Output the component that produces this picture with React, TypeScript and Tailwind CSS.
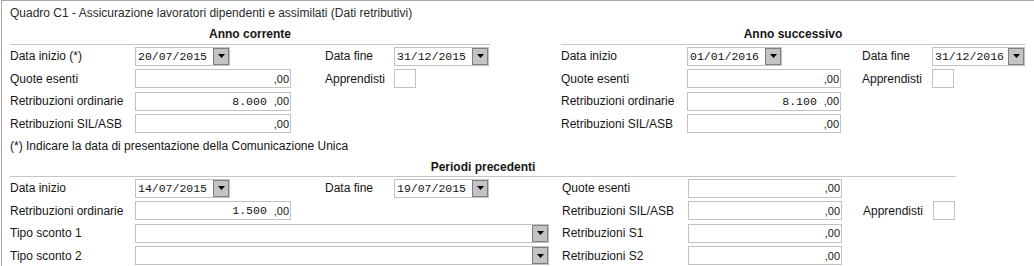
import type { ReactNode } from 'react';

const mono = "font-['Liberation_Mono','DejaVu_Sans_Mono',monospace] text-[11.5px]";

const Arrow = () => (
  <svg width="7" height="4" viewBox="0 0 7 4">
    <path d="M0 0 H7 L3.5 4 Z" fill="#000" />
  </svg>
);

const DropButton = () => (
  <div className="flex h-[17px] w-[16px] shrink-0 items-center justify-center border border-[#7f7f7f] bg-[#c3c3c3]">
    <Arrow />
  </div>
);

const DateField = ({ value }: { value: string }) => (
  <div className="flex h-[19px] w-[95px] items-center border border-[#c2c2c2] bg-white">
    <span className={`flex-1 pl-[2px] text-[#111] ${mono}`}>{value}</span>
    <DropButton />
  </div>
);

const SelectField = () => (
  <div className="flex h-[19px] w-[414px] items-center justify-end border border-[#c2c2c2] bg-white">
    <DropButton />
  </div>
);

const Money = ({ value, w = 'w-[156px]' }: { value?: string; w?: string }) => (
  <div className={`flex h-[19px] ${w} items-center justify-end border border-[#c2c2c2] bg-white pr-[1px]`}>
    {value && <span className={`${mono} text-[#111]`}>{value}&nbsp;</span>}
    <span className="text-[11px]">,00</span>
  </div>
);

const Box = () => <div className="h-[19px] w-[22px] border border-[#c2c2c2] bg-white" />;

const Row = ({ children }: { children: ReactNode }) => (
  <div className="flex h-[22.5px] items-center">{children}</div>
);

const Lbl = ({ w, children }: { w: string; children?: ReactNode }) => (
  <div className={`${w} shrink-0 whitespace-nowrap`}>{children}</div>
);

const Header = ({ title, className }: { title: string; className: string }) => (
  <div className={`${className} border-b border-[#c6c6c6] text-center font-bold`}>{title}</div>
);

export default function App() {
  return (
    <div className="h-[266px] w-[1034px] overflow-hidden bg-white font-['Liberation_Sans',Arial,sans-serif] text-[12px] text-[#161616]">
      <div className="ml-[1px] h-full border-l border-t border-[#a8a8a8] pl-[8px] pt-[5px]">
        <div className="h-[17px] leading-[14px] text-[#2a2a2a]">
          Quadro C1 - Assicurazione lavoratori dipendenti e assimilati (Dati retributivi)
        </div>

        <div className="flex">
          {/* Anno corrente */}
          <div className="w-[480px]">
            <Header title="Anno corrente" className="h-[22px] pt-[4px] leading-[14px]" />
            <Row>
              <Lbl w="w-[125px]">Data inizio (*)</Lbl>
              <Lbl w="w-[190px]"><DateField value="20/07/2015" /></Lbl>
              <Lbl w="w-[69px]">Data fine</Lbl>
              <DateField value="31/12/2015" />
            </Row>
            <Row>
              <Lbl w="w-[125px]">Quote esenti</Lbl>
              <Lbl w="w-[190px]"><Money /></Lbl>
              <Lbl w="w-[69px]">Apprendisti</Lbl>
              <Box />
            </Row>
            <Row>
              <Lbl w="w-[125px]">Retribuzioni ordinarie</Lbl>
              <Money value="8.000" />
            </Row>
            <Row>
              <Lbl w="w-[125px]">Retribuzioni SIL/ASB</Lbl>
              <Money />
            </Row>
          </div>

          <div className="w-[71px]" />

          {/* Anno successivo */}
          <div className="w-[464px]">
            <Header title="Anno successivo" className="h-[22px] pt-[4px] leading-[14px]" />
            <Row>
              <Lbl w="w-[126px]">Data inizio</Lbl>
              <Lbl w="w-[175px]"><DateField value="01/01/2016" /></Lbl>
              <Lbl w="w-[70px]">Data fine</Lbl>
              <DateField value="31/12/2016" />
            </Row>
            <Row>
              <Lbl w="w-[126px]">Quote esenti</Lbl>
              <Lbl w="w-[175px]"><Money w="w-[154px]" /></Lbl>
              <Lbl w="w-[70px]">Apprendisti</Lbl>
              <Box />
            </Row>
            <Row>
              <Lbl w="w-[126px]">Retribuzioni ordinarie</Lbl>
              <Money value="8.100" w="w-[154px]" />
            </Row>
            <Row>
              <Lbl w="w-[126px]">Retribuzioni SIL/ASB</Lbl>
              <Money w="w-[154px]" />
            </Row>
          </div>
        </div>

        <div className="flex h-[22px] items-center">(*) Indicare la data di presentazione della Comunicazione Unica</div>

        {/* Periodi precedenti */}
        <div className="w-[946px]">
          <Header title="Periodi precedenti" className="h-[20px] pt-[3px] leading-[14px]" />
          <Row>
            <Lbl w="w-[125px]">Data inizio</Lbl>
            <Lbl w="w-[190px]"><DateField value="14/07/2015" /></Lbl>
            <Lbl w="w-[69px]">Data fine</Lbl>
            <Lbl w="w-[168px]"><DateField value="19/07/2015" /></Lbl>
            <Lbl w="w-[126px]">Quote esenti</Lbl>
            <Money w="w-[154px]" />
          </Row>
          <Row>
            <Lbl w="w-[125px]">Retribuzioni ordinarie</Lbl>
            <Lbl w="w-[427px]"><Money value="1.500" /></Lbl>
            <Lbl w="w-[126px]">Retribuzioni SIL/ASB</Lbl>
            <Lbl w="w-[175px]"><Money w="w-[154px]" /></Lbl>
            <Lbl w="w-[70px]">Apprendisti</Lbl>
            <Box />
          </Row>
          <Row>
            <Lbl w="w-[125px]">Tipo sconto 1</Lbl>
            <Lbl w="w-[427px]"><SelectField /></Lbl>
            <Lbl w="w-[126px]">Retribuzioni S1</Lbl>
            <Money w="w-[154px]" />
          </Row>
          <Row>
            <Lbl w="w-[125px]">Tipo sconto 2</Lbl>
            <Lbl w="w-[427px]"><SelectField /></Lbl>
            <Lbl w="w-[126px]">Retribuzioni S2</Lbl>
            <Money w="w-[154px]" />
          </Row>
        </div>
      </div>
    </div>
  );
}
